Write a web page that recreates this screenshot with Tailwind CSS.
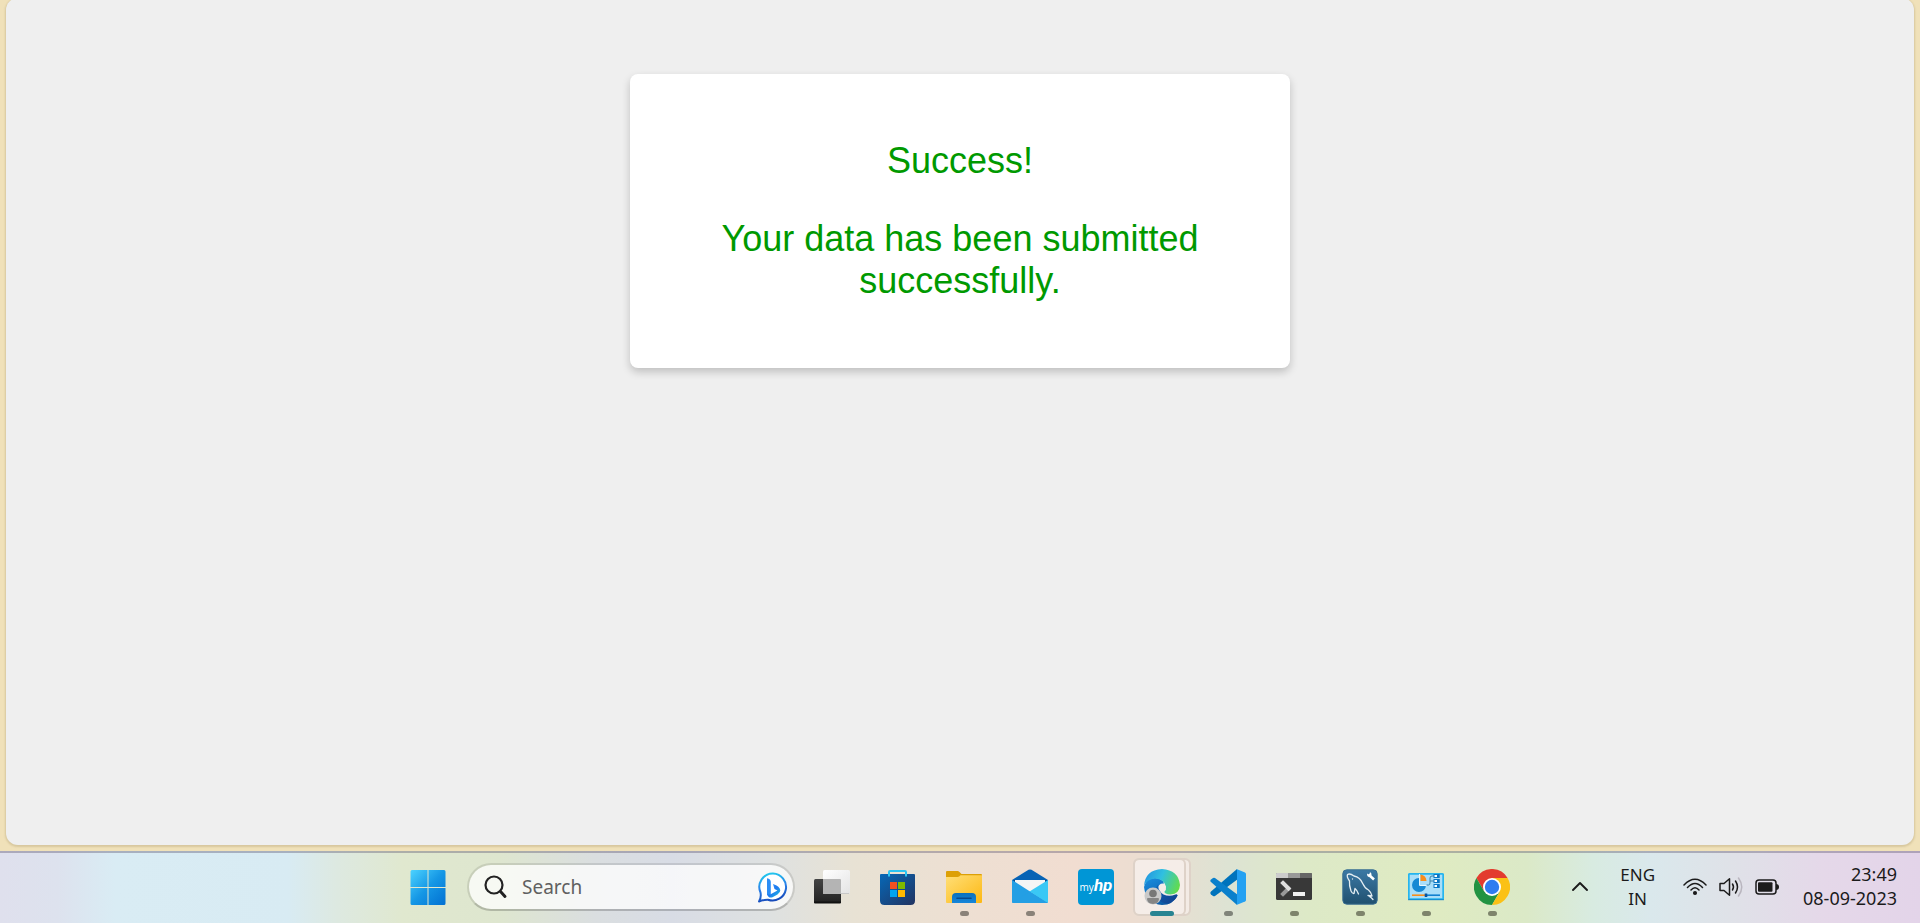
<!DOCTYPE html>
<html lang="en">
<head>
<meta charset="utf-8">
<meta name="viewport" content="width=device-width, initial-scale=1">
<title>Success</title>
<script src="https://cdn.jsdelivr.net/npm/@tailwindcss/browser@4"></script>
</head>
<body class="flex h-screen flex-col overflow-hidden bg-[#f0e1b9]">

<!-- Browser page -->
<main class="mx-1.5 -mt-0.5 mb-1.5 flex-1 rounded-xl bg-[#efefef] px-4 pt-[76px] font-['Liberation_Sans',Arial,sans-serif] shadow-[0_1px_2px_1px_rgba(120,100,50,0.2)]">
  <section class="mx-auto max-w-[660px] rounded-lg bg-white px-[30px] py-[66px] text-center text-4xl leading-[42px] text-[#009900] shadow-[0_4px_8px_rgba(0,0,0,0.2)]">
    <p>Success!</p>
    <p class="mt-9">Your data has been submitted successfully.</p>
  </section>
</main>

<!-- Taskbar -->
<footer class="grid h-[72px] shrink-0 grid-cols-[1fr_auto_1fr] border-t-2 border-[#605870]/40 bg-[linear-gradient(90deg,#dfe0ed_0%,#dde2ee_3%,#d9ecf4_6%,#d8ebf3_15%,#dde9e1_17.5%,#e0e8cf_21%,#dee6cf_26%,#dadee0_31%,#d8dce5_35%,#dee1e1_40%,#e8e2d4_44.5%,#eedfd2_51%,#f1ddd1_56%,#ebddd1_60%,#dde3d3_64%,#dde9c7_68%,#dfebc2_75%,#dbe9c7_79.5%,#d8ebe1_83%,#dae8ec_86%,#dfe2e8_90%,#e5d8e9_95%,#e3d4e9_100%)] pb-0.5 font-['Noto_Sans','Open_Sans',sans-serif] text-[#1b1b1b]">
  <nav class="col-start-2 flex items-center" aria-label="Taskbar">
    <button class="mr-1.5 flex h-full w-[66px] items-center justify-center" aria-label="Start">
      <svg class="size-9" viewBox="0 0 36 36">
        <defs><linearGradient id="win" x1="0" y1="0" x2="1" y2="1"><stop stop-color="#4cd3ff"/><stop offset=".5" stop-color="#1597e5"/><stop offset="1" stop-color="#0270d2"/></linearGradient></defs>
        <path fill="url(#win)" d="M2 1H17.500V18H.5V2.500A1.500 1.500 0 0 1 2 1ZM18.500 1H34A1.500 1.500 0 0 1 35.500 2.500V18H18.500ZM.5 19H17.500V36H2A1.500 1.500 0 0 1 .5 34.500ZM18.500 19H35.500V34.500A1.500 1.500 0 0 1 34 36H18.500Z"/>
      </svg>
    </button>

    <label class="mr-1 flex h-12 w-[328px] items-center rounded-full border-2 border-t-black/10 border-r-black/10 border-b-black/20 border-l-black/10 bg-white/75 bg-clip-padding pr-1 pl-[15px]">
      <svg class="size-6 shrink-0" viewBox="0 0 24 24" fill="none" stroke="#222" stroke-linecap="round"><circle cx="10" cy="10" r="8.500" stroke-width="2.200"/><path stroke-width="3" d="M16.500 16.500 21 21.500"/></svg>
      <input type="search" aria-label="Search" placeholder="Search" class="ml-[14px] min-w-0 flex-1 bg-transparent text-[19px] leading-7 outline-none placeholder:text-[#606060]">
      <svg class="size-8 shrink-0" viewBox="0 0 32 32">
        <defs>
          <linearGradient id="bing-ring" x1=".3" y1="0" x2=".5" y2="1"><stop stop-color="#21c9ee"/><stop offset=".5" stop-color="#2a80e8"/><stop offset="1" stop-color="#1648b8"/></linearGradient>
          <linearGradient id="bing-b" x1="0" y1="0" x2="1" y2="1"><stop stop-color="#3aa0ff"/><stop offset=".5" stop-color="#1d78ee"/><stop offset="1" stop-color="#22c8e0"/></linearGradient>
        </defs>
        <path fill="#fff" stroke="url(#bing-ring)" stroke-width="2" stroke-linejoin="round" d="M16 2.500A13.500 13.500 0 1 1 11 28.700Q7 28.500 2 30.500Q4.500 26.500 3.500 21.500A13.500 13.500 0 0 1 16 2.500Z"/>
        <path fill="#2b8df5" d="M10 7.200Q13.800 8 13.800 11V23.500Q12.500 25.500 10 23.500Z"/>
        <path fill="url(#bing-b)" d="M10 22.500Q12 24.500 15 22.500L20.500 19.500 17.500 18 16 13Q23 15.500 23.300 19.200Q23.500 21.500 20.500 23.500L15.500 26.300Q11.500 27.500 10 23.500Z"/>
      </svg>
    </label>

    <button class="flex h-full w-[66px] items-center justify-center" aria-label="Task view">
      <svg class="size-9" viewBox="0 0 36 36">
        <defs><linearGradient id="tv1" x1="0" y1="0" x2="0" y2="1"><stop stop-color="#444"/><stop offset="1" stop-color="#222"/></linearGradient><linearGradient id="tv2" x1="0" y1="0" x2="1" y2="1"><stop stop-color="#fff"/><stop offset="1" stop-color="#e4e4e4"/></linearGradient></defs>
        <rect y="10" width="27" height="24" rx="1.500" fill="url(#tv1)"/><path d="M0 32.500H27V33.500Q27 34.500 26 34.500H1Q0 34.500 0 33.500Z" fill="#111"/>
        <rect x="9" y="1" width="27" height="24" rx="1.500" fill="url(#tv2)"/><path fill="#b4b4b4" d="M9 10H26Q27 10 27 11V25H10Q9 25 9 24Z"/><path stroke="#c8c8c8" d="M27 24.500H35"/>
      </svg>
    </button>

    <button class="flex h-full w-[66px] items-center justify-center" aria-label="Microsoft Store">
      <svg class="size-9" viewBox="0 0 36 36">
        <defs><linearGradient id="store" x1="0" y1="0" x2="1" y2="1"><stop stop-color="#0668b7"/><stop offset="1" stop-color="#223361"/></linearGradient></defs>
        <path fill="url(#store)" d="M0 6Q0 5 1 5H34Q35 5 35 6V31.500Q35 36 30.500 36H4.500Q0 36 0 31.500Z"/>
        <path fill="none" stroke="#2bc3f2" stroke-width="2" d="M9 7.500V3Q9 2 10 2H25Q26 2 26 3V7.500"/>
        <path fill="#f25022" d="M10 13H17V20H10Z"/><path fill="#7fba00" d="M18 13H25V20H18Z"/><path fill="#00a4ef" d="M10 21H17V28H10Z"/><path fill="#ffb900" d="M18 21H25V28H18Z"/>
      </svg>
    </button>

    <button class="relative flex h-full w-[66px] items-center justify-center" aria-label="File Explorer">
      <svg class="size-9" viewBox="0 0 36 36">
        <defs><linearGradient id="fold" x1="0" y1="0" x2="1" y2="1"><stop stop-color="#ffdf78"/><stop offset="1" stop-color="#fdb813"/></linearGradient><linearGradient id="fold2" x1="0" y1="0" x2="0" y2="1"><stop stop-color="#0b70bd"/><stop offset="1" stop-color="#1686da"/></linearGradient></defs>
        <path fill="#dda006" d="M0 3Q0 2 1 2H11.500Q12.500 2 13.500 3L15.500 5H35Q36 5 36 6V12H0Z"/>
        <path fill="url(#fold)" d="M0 8H11.500Q12.500 8 13.500 7.200L14.500 6.200H36V33Q36 34 35 34H1Q0 34 0 33Z"/>
        <path fill="url(#fold2)" d="M6 34V28Q6 24 10 24H26Q30 24 30 28V34Z"/><path stroke="#08498c" stroke-width="1.600" stroke-linecap="round" d="M11 29.200H25"/>
      </svg>
      <span class="absolute bottom-[5px] h-[5px] w-[9px] rounded-full bg-[#8a8279]"></span>
    </button>

    <button class="relative flex h-full w-[66px] items-center justify-center" aria-label="Mail">
      <svg class="size-9" viewBox="0 0 36 36">
        <path fill="#0763b5" d="M16.500 .8Q18 0 19.500 .8L36 11V18H0V11Z"/><path fill="#06488b" d="M1 11H35L31 16H5Z"/>
        <path fill="#f5f5f5" d="M3 11H33V18L18 27 3 18Z"/>
        <path fill="#249fe4" d="M0 11 36 34H1Q0 34 0 33Z"/><path fill="#3ac8f5" d="M36 11V33L35.500 34 17.500 22.500Z"/><path fill="#249fe4" d="M0 34 17.500 22.500 36 34Z"/>
      </svg>
      <span class="absolute bottom-[5px] h-[5px] w-[9px] rounded-full bg-[#8a8279]"></span>
    </button>

    <button class="flex h-full w-[66px] items-center justify-center" aria-label="myHP">
      <span class="flex size-9 items-baseline justify-center rounded-sm bg-[#0096d6] pt-1 leading-6 text-white"><span class="font-['Open_Sans',sans-serif] text-[10px]">my</span><span class="font-[Roboto,sans-serif] text-[17px] font-bold italic">hp</span></span>
    </button>

    <button class="relative flex h-full w-[66px] items-center justify-center" aria-label="Microsoft Edge">
      <span class="absolute top-[5px] left-[11px] h-[58px] w-[51px] rounded-md border-2 border-[#ded2c8] bg-[#f3ebe5] bg-clip-padding"></span>
      <span class="absolute top-[5px] left-1 h-[58px] w-[53px] rounded-md border-2 border-[#ded2c8] bg-[#f5ede8] bg-clip-padding"></span>
      <svg class="relative size-9" viewBox="0 0 36 36">
        <defs>
          <linearGradient id="e1" x1="0" y1=".3" x2="1" y2=".6"><stop stop-color="#2497e0"/><stop offset=".45" stop-color="#30c0e0"/><stop offset="1" stop-color="#62dc4c"/></linearGradient>
          <linearGradient id="e2" x1="0" y1="0" x2=".6" y2="1"><stop stop-color="#1a8ee0"/><stop offset="1" stop-color="#0c59a4"/></linearGradient>
          <linearGradient id="e3" x1="0" y1="0" x2="1" y2="1"><stop stop-color="#1165b8"/><stop offset="1" stop-color="#113f8b"/></linearGradient>
        </defs>
        <path fill="url(#e2)" d="M0 18Q2 9 11 9 19 9.500 20 14.500 14 14 14 20 15 26 23 29 29 30 34 26 29 36 18 36 2 35 0 18Z"/>
        <path fill="url(#e3)" d="M14 15.500Q9 22 13 28.500 17 35 25 34.500 31 32 33.500 26.500 33 24.500 31.500 25.500 25 28 19.500 25.500 14 22 14 15.500Z"/>
        <path fill="url(#e1)" d="M0 17Q1 1 18 0 34.500 1 36 16 35.500 25 26.500 25.500 20 25 20.500 22.500 22.500 21 22 17.500 20 10 11 9.500 3 10 0 17Z"/>
        <circle cx="9" cy="27" r="8.500" fill="#c9c9c9"/><circle cx="9" cy="24.500" r="3.800" fill="#777"/><path fill="#858585" d="M3 30Q3 29 4 29H14Q15 29 15 30 14.500 34.800 9 35 3.500 34.800 3 30Z"/>
      </svg>
      <span class="absolute bottom-[5px] h-[5px] w-6 rounded-full bg-[#288492]"></span>
    </button>

    <button class="relative flex h-full w-[66px] items-center justify-center" aria-label="Visual Studio Code">
      <svg class="size-9" viewBox="0 0 36 36">
        <path fill="#0073bc" d="M27 0 1 22.500Q-.3 24 1 25.500L3 27Q4 27.500 5 27L28 10Z"/>
        <path fill="#0a80cc" d="M27 36 1 13Q-.3 11.500 1 10.500L3 9Q4 8.500 5 9L28 26Z"/>
        <path fill="#24a1f2" d="M27 .3 35 3.500Q36 4 36 5V31Q36 32 35 32.500L27 35.700Z"/>
      </svg>
      <span class="absolute bottom-[5px] h-[5px] w-[9px] rounded-full bg-[#80847a]"></span>
    </button>

    <button class="relative flex h-full w-[66px] items-center justify-center" aria-label="Terminal">
      <svg class="size-9" viewBox="0 0 36 36">
        <rect y="4" width="36" height="27" rx="1.500" fill="#383838"/><path fill="#ccc" d="M1 4H12V9H0V5Q0 4 1 4Z"/><path fill="#999" d="M12 4H24V9H12Z"/><path fill="#666" d="M24 4H35Q36 4 36 5V9H24Z"/>
        <path fill="none" stroke="#999" stroke-width="4" stroke-linecap="square" d="M12.500 19.500 7 25"/><path fill="none" stroke="#dedede" stroke-width="4" stroke-linecap="square" d="M7 14 12.500 19.500"/><rect x="17" y="23" width="12" height="4" fill="#f1f1f1"/>
      </svg>
      <span class="absolute bottom-[5px] h-[5px] w-[9px] rounded-full bg-[#7e846c]"></span>
    </button>

    <button class="relative flex h-full w-[66px] items-center justify-center" aria-label="MySQL Workbench">
      <svg class="size-9" viewBox="0 0 36 36">
        <defs><linearGradient id="sql" x1="0" y1="0" x2="0" y2="1"><stop stop-color="#3b79a5"/><stop offset="1" stop-color="#20506f"/></linearGradient></defs>
        <rect x=".8" y=".8" width="34.400" height="34.400" rx="4" fill="url(#sql)" stroke="#3a6f92"/>
        <path fill="none" stroke="#e3edf2" stroke-width="1.300" stroke-linejoin="round" stroke-linecap="round" d="M9 22Q7 16 7.500 12Q4.500 8 5.500 5.500Q8 4 12 7Q18 8 21 15Q23 19.500 26.500 21Q29 23 30 27L26 26.500Q29.500 28.500 31 30.500M9 22Q10.500 25 12 24.500L13 19.500Q15 21 16.500 25M10.500 9.800V10"/>
        <path fill="none" stroke="#fff" stroke-width="2.600" d="M26.500 5.500 32 10.500"/><path fill="#fff" d="M25 4.500 27.500 6 28 3Q30 4 29.500 6.500L27.500 8Q25 8 25 4.500Z"/>
      </svg>
      <span class="absolute bottom-[5px] h-[5px] w-[9px] rounded-full bg-[#7e846c]"></span>
    </button>

    <button class="relative flex h-full w-[66px] items-center justify-center" aria-label="Control Panel">
      <svg class="size-9" viewBox="0 0 36 36">
        <rect x=".8" y="4.800" width="34.400" height="25.400" rx="1" fill="#a9def9" stroke="#25b5ee" stroke-width="1.800"/><path stroke="#1687cc" d="M0 30.700H36"/>
        <path fill="#1688d4" d="M11 9A7 7 0 1 0 18 16H11Z"/><path fill="#f78d1d" d="M12.500 5.500A7 7 0 0 1 18.500 12H12.500Z"/><path fill="none" stroke="#e8f8ff" d="M11.500 5V16.500H19"/>
        <path fill="none" stroke="#3b80a5" d="M18.500 16H20.500Q22 16 22 14V9Q22 7 24 7H26M22 12H26"/>
        <g fill="#fff" stroke="#0a76c5"><rect x="26" y="5.500" width="5" height="3"/><rect x="26" y="10.500" width="5" height="3"/><rect x="26" y="15.500" width="5" height="3"/></g><path fill="#0a76c5" d="M29 5H31.500V9H29ZM29 10H31.500V14H29ZM29 15H31.500V19H29Z"/>
        <path stroke="#f78d1d" stroke-width="1.600" d="M4 26.200H17"/><path stroke="#1381d0" stroke-width="1.600" d="M19 26.200H32"/><rect x="16.700" y="24.500" width="2.600" height="3.500" fill="#07539e"/>
      </svg>
      <span class="absolute bottom-[5px] h-[5px] w-[9px] rounded-full bg-[#7e846c]"></span>
    </button>

    <button class="relative flex h-full w-[66px] items-center justify-center" aria-label="Google Chrome">
      <svg class="size-9" viewBox="0 0 36 36">
        <path fill="#e33b2e" d="M2.400 9A18 18 0 0 1 33.600 9L18 9 10.200 22.500Z"/>
        <path fill="#229342" d="M2.400 9A18 18 0 0 0 18 36L25.800 22.500 10.200 22.500Z"/>
        <path fill="#fbc116" d="M33.600 9A18 18 0 0 1 18 36L25.800 22.500 18 9Z"/>
        <circle cx="18" cy="18" r="9" fill="#fff"/><circle cx="18" cy="18" r="7.200" fill="#2f7cf0"/>
      </svg>
      <span class="absolute bottom-[5px] h-[5px] w-[9px] rounded-full bg-[#7e846c]"></span>
    </button>
  </nav>

  <!-- System tray -->
  <div class="flex items-center justify-end pr-[23px]">
    <button class="mr-8 flex size-4 items-center justify-center" aria-label="Show hidden icons">
      <svg class="size-4" viewBox="0 0 16 16" fill="none" stroke="currentColor" stroke-width="1.900" stroke-linecap="round" stroke-linejoin="round"><path d="M1 11 8 4 15 11"/></svg>
    </button>
    <button class="mr-7 text-center text-[17px] leading-6">ENG<br>IN</button>
    <button class="mr-6 flex items-center gap-3" aria-label="Network, volume and battery">
      <svg class="size-6" viewBox="0 0 24 24" fill="none" stroke="currentColor" stroke-width="1.500" stroke-linecap="round"><path d="M1 10Q12-1.500 23 10M4.500 12.500Q12 4.500 19.500 12.500M8 15Q12 10.500 16 15"/><circle cx="12" cy="18" r="1.300" fill="currentColor"/></svg>
      <svg class="size-6" viewBox="0 0 24 24" fill="none" stroke="currentColor" stroke-width="1.500" stroke-linecap="round" stroke-linejoin="round"><path d="M1 8.500H5L10.500 3.800V20.200L5 15.500H1ZM13.500 9Q15.500 12 13.500 15M16.500 6Q20.500 12 16.500 18"/><path stroke="#b9b6bf" d="M19.500 3Q26 12 19.500 21"/></svg>
      <svg class="size-6" viewBox="0 0 24 24"><rect x="1" y="5" width="20" height="14" rx="3" fill="none" stroke="currentColor" stroke-width="1.500"/><rect x="3" y="7.300" width="14.500" height="9.400" rx="1" fill="currentColor"/><path fill="currentColor" d="M21 9Q24 9 24 12 24 15 21 15Z"/></svg>
    </button>
    <button class="pb-0.5 text-right text-[18px] leading-6">23:49<br>08-09-2023</button>
  </div>
</footer>
</body>
</html>
